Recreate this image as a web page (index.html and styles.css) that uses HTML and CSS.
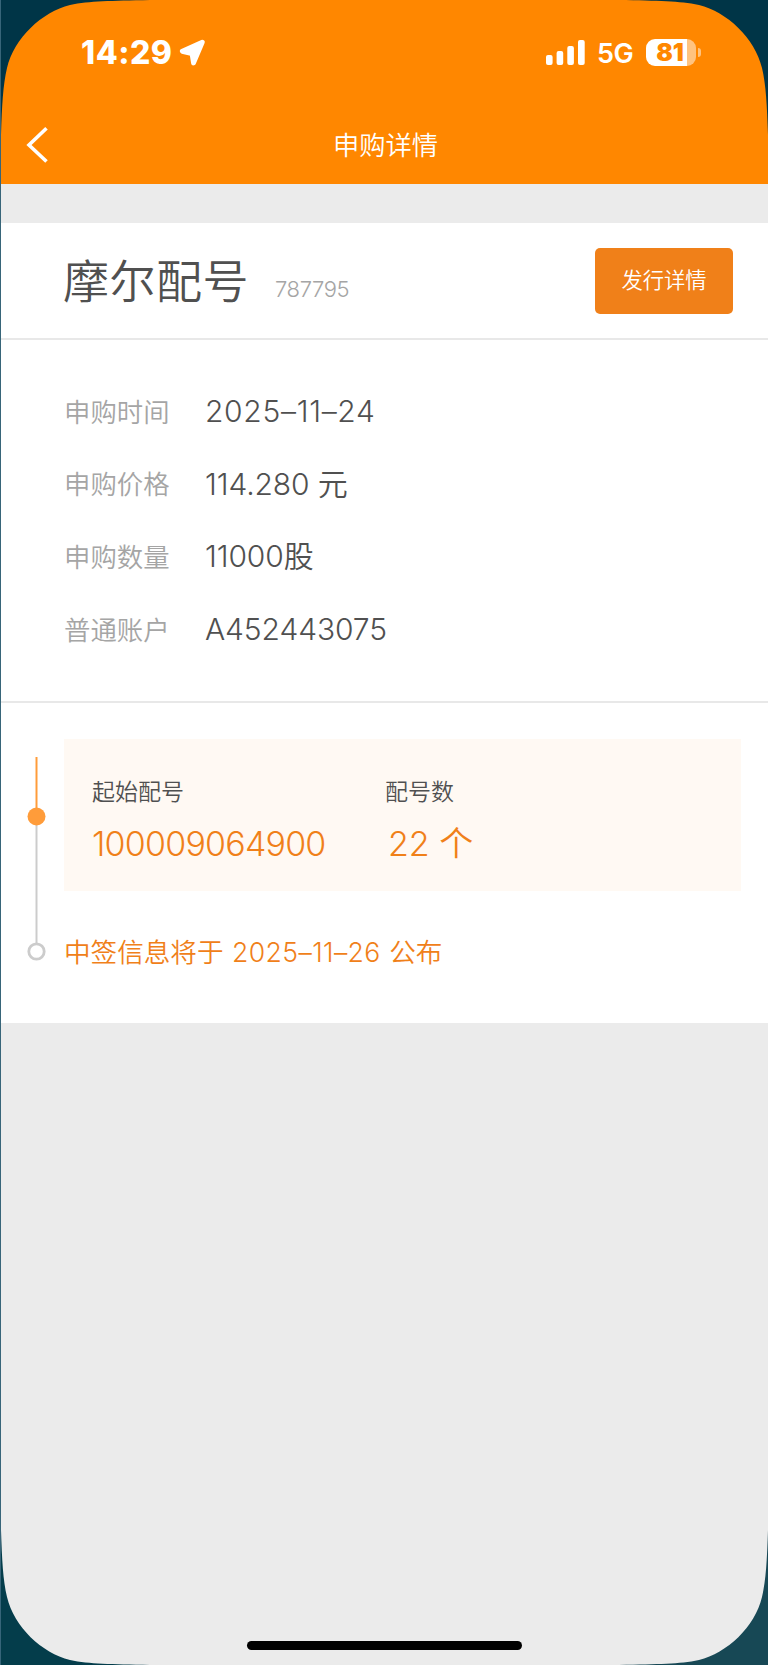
FILE: index.html
```html
<!DOCTYPE html>
<html lang="zh-CN">
<head>
    <meta charset="UTF-8">
    <meta name="viewport" content="width=device-width, initial-scale=1.0">
    <title>申购详情</title>
    <link rel="stylesheet" href="styles.css">
</head>
<body>
    <div class="screen">
        <header class="header">
            <div class="status-bar">
                <span class="time">14:29</span>
                <svg class="location-icon" width="28" height="28" viewBox="0 0 28 28">
                    <path d="M24.300 3.200 L4.300 12.300 L14 14.700 L15.500 24 Z" fill="#fff" stroke="#fff" stroke-width="4.800" stroke-linejoin="round"/>
                </svg>
                <svg class="signal-icon" width="40" height="26" viewBox="0 0 40 26" fill="#fff">
                    <rect x="0" y="15" width="6.600" height="10" rx="2"/>
                    <rect x="10.600" y="11" width="6.600" height="14" rx="2"/>
                    <rect x="21.300" y="6" width="6.600" height="19" rx="2"/>
                    <rect x="32" y="0" width="6.700" height="25" rx="2"/>
                </svg>
                <span class="network">5G</span>
                <div class="battery">
                    <div class="battery-body"><span class="battery-level">81</span></div>
                    <div class="battery-cap"></div>
                </div>
            </div>
            <div class="nav-bar">
                <svg class="back-icon" width="24" height="38" viewBox="0 0 24 38">
                    <path d="M21.500 2.200 L4 19 L21.500 35.500" fill="none" stroke="#fff" stroke-width="3.600"/>
                </svg>
                <h1>申购详情</h1>
            </div>
        </header>

        <main class="content">
            <section class="stock">
                <h2>摩尔配号</h2>
                <span class="stock-code">787795</span>
                <button class="detail-btn">发行详情</button>
            </section>

            <section class="info">
                <div class="info-row"><span class="label">申购时间</span><span class="value date">2025–11–24</span></div>
                <div class="info-row"><span class="label">申购价格</span><span class="value">114.280 元</span></div>
                <div class="info-row"><span class="label">申购数量</span><span class="value">11000股</span></div>
                <div class="info-row"><span class="label">普通账户</span><span class="value">A452443075</span></div>
            </section>

            <section class="progress">
                <svg class="timeline" width="20" height="206" viewBox="0 0 20 206">
                    <path d="M10.500 0 V60" stroke="#ff9c3a" stroke-width="2"/>
                    <path d="M10.500 60 V186" stroke="#ccc" stroke-width="2"/>
                    <circle cx="10.500" cy="59.500" r="9" fill="#ff9c3a"/>
                    <circle cx="10.500" cy="194.500" r="7.700" fill="#fff" stroke="#ccc" stroke-width="2.800"/>
                </svg>
                <div class="progress-body">
                    <div class="panel">
                        <div class="panel-item first">
                            <span class="panel-label">起始配号</span>
                            <span class="panel-value number">100009064900</span>
                        </div>
                        <div class="panel-item">
                            <span class="panel-label">配号数</span>
                            <span class="panel-value count">22 个</span>
                        </div>
                    </div>
                    <p class="notice">中签信息将于 <span class="notice-date">2025–11–26</span> 公布</p>
                </div>
            </section>
        </main>

        <!-- Rounded corners of the device and the home bar -->
        <svg class="corner top-left" width="150" height="135" viewBox="0 0 150 135"><path d="M0 0 H150 C110 1 90 0.800 70 5 C42 12 14 38 7 68 C3 85 2 105 1 135 H0 Z"/></svg>
        <svg class="corner top-right" width="150" height="135" viewBox="0 0 150 135"><path d="M0 0 H150 C110 1 90 0.800 70 5 C42 12 14 38 7 68 C3 85 2 105 1 135 H0 Z"/></svg>
        <svg class="corner bottom-left" width="150" height="135" viewBox="0 0 150 135"><path d="M0 0 H150 C110 1 90 0.800 70 5 C42 12 14 38 7 68 C3 85 2 105 1 135 H0 Z"/></svg>
        <svg class="corner bottom-right" width="150" height="135" viewBox="0 0 150 135"><path d="M0 0 H150 C110 1 90 0.800 70 5 C42 12 14 38 7 68 C3 85 2 105 1 135 H0 Z"/></svg>
        <div class="home-bar"></div>
    </div>
</body>
</html>
```
FILE: styles.css
```css
* {
    box-sizing: border-box;
    margin: 0;
    padding: 0;
}

body {
    background-color: #ebebeb;
    font-family: Inter, 'Noto Sans CJK SC', sans-serif;
    font-weight: 350;
    color: #505050;
}

.screen {
    position: relative;
    width: 768px;
    height: 1665px;
    overflow: hidden;
    border-left: 1px solid #376579;
    background-color: #ebebeb;
}

.header {
    height: 184px;
    background-color: #ff8700;
    color: #fff;
}

.status-bar {
    display: flex;
    align-items: center;
    height: 105px;
    padding: 0 67px 0 80px;
}

.time {
    width: 97px;
    padding-top: 1px;
    font-size: 32px;
    font-weight: 800;
    letter-spacing: 0.5px;
    line-height: 40px;
}

.signal-icon {
    margin-left: auto;
}

.network {
    width: 48px;
    padding-top: 1px;
    padding-left: 11px;
    font-size: 27px;
    font-weight: 600;
    letter-spacing: -0.5px;
}

.battery {
    display: flex;
    align-items: center;
    gap: 2px;
    margin-left: 12px;
}

.battery-body {
    display: flex;
    align-items: center;
    justify-content: center;
    width: 50px;
    height: 27px;
    padding-right: 2px;
    border-radius: 9px;
    background: linear-gradient(to right, #fff 41px, #ffc380 41px);
}

.battery-level {
    color: #ff8700;
    font-size: 24.5px;
    font-weight: 900;
    line-height: 27px;
}

.battery-cap {
    width: 3px;
    height: 9px;
    border-radius: 0 4px 4px 0;
    background-color: #ffc380;
}

.nav-bar {
    display: flex;
    align-items: center;
    height: 80px;
    padding-left: 24px;
}

h1 {
    flex: 1;
    padding-top: 2px;
    padding-right: 46px;
    text-align: center;
    font-size: 26.3px;
    font-weight: 350;
    line-height: 40px;
}

.content {
    margin-top: 39px;
    background-color: #fff;
}

.stock {
    display: flex;
    align-items: center;
    height: 117px;
    padding: 0 35px 0 62px;
    border-bottom: 2px solid #e8e8e8;
}

h2 {
    font-size: 46px;
    font-weight: 350;
    letter-spacing: 0.5px;
    line-height: 60px;
}

.stock-code {
    padding-top: 16px;
    margin-left: 26px;
    color: #a5a5a5;
    font-size: 22px;
    letter-spacing: -0.4px;
}

.detail-btn {
    width: 138px;
    height: 66px;
    margin-left: auto;
    padding-bottom: 4px;
    border: none;
    border-radius: 5px;
    background-color: #f08019;
    color: #fff;
    font-family: inherit;
    font-size: 21.3px;
    font-weight: 350;
}

.info {
    height: 363px;
    padding: 35px 0 0 63px;
    border-bottom: 2px solid #e8e8e8;
}

.info-row {
    display: flex;
    align-items: center;
    height: 72.6px;
}

.label {
    width: 141px;
    padding-top: 1px;
    color: #a5a5a5;
    font-size: 26.4px;
    line-height: 40px;
}

.value {
    font-size: 30px;
    letter-spacing: -0.1px;
    line-height: 40px;
}

.date {
    letter-spacing: 0.7px;
}

.progress {
    display: flex;
    height: 320px;
    padding: 36px 27px 0 25px;
}

.timeline {
    flex: none;
    margin-top: 18px;
}

.progress-body {
    flex: 1;
    margin-left: 18px;
}

.panel {
    display: flex;
    height: 152px;
    padding: 36px 28px 0;
    background-color: #fff9f3;
}

.panel-item {
    display: flex;
    flex-direction: column;
}

.first {
    width: 293px;
}

.panel-label {
    font-size: 23px;
    line-height: 34px;
}

.panel-value {
    margin-top: 10px;
    color: #f08019;
    font-size: 34px;
    line-height: 50px;
}

.number {
    letter-spacing: -0.8px;
}

.count {
    padding-left: 3px;
}

.notice {
    margin-top: 41px;
    color: #f08019;
    font-size: 26.6px;
    line-height: 40px;
    word-spacing: 1px;
}

.notice-date {
    letter-spacing: 0.4px;
}

.corner {
    position: absolute;
    fill: #003547;
}

.top-left {
    top: 0;
    left: -1px;
}

.top-right {
    top: 0;
    right: -1px;
    transform: scaleX(-1);
}

.bottom-left {
    bottom: 0;
    left: -1px;
    fill: #043d4b;
    transform: scaleY(-1);
}

.bottom-right {
    right: -1px;
    bottom: 0;
    fill: #174855;
    transform: scale(-1);
}

.home-bar {
    position: absolute;
    bottom: 15px;
    left: 246px;
    width: 275px;
    height: 9px;
    border-radius: 5px;
    background-color: #000;
}
```
